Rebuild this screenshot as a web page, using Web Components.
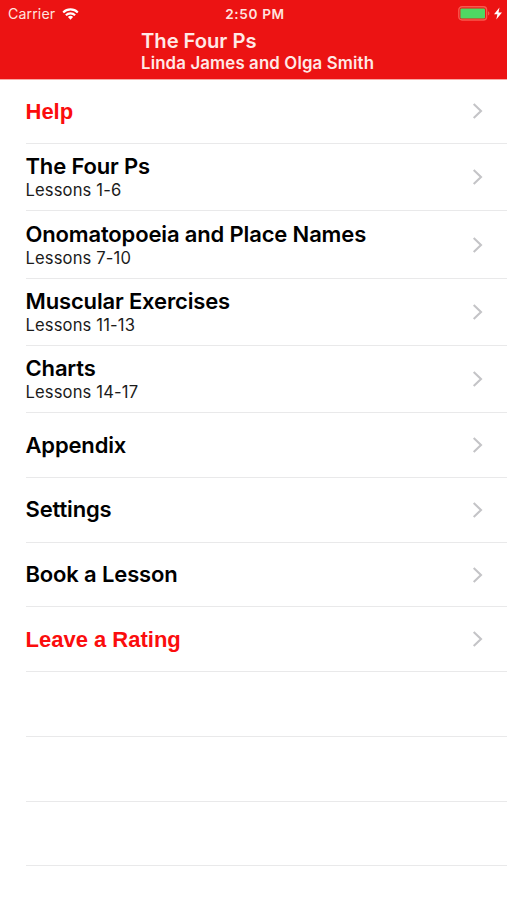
<!DOCTYPE html>
<html lang="en">
<head>
<meta charset="utf-8">
<title>The Four Ps</title>
<style>
html,body{margin:0;background:#fff}
body{width:507px;height:900px;overflow:hidden;font-family:Inter,"Liberation Sans",sans-serif;color:#000}
</style>
</head>
<body>
<app-screen></app-screen>
<script>
class StatusBar extends HTMLElement{
  constructor(){
    super();
    this.attachShadow({mode:'open'}).innerHTML=`
<style>
:host{display:grid;grid-template-columns:1fr auto 1fr;align-items:center;height:27px;color:#ffe3df;padding:0 5px 0 8px;box-sizing:border-box}
.l{display:flex;align-items:center;gap:7px;font-size:14.2px;letter-spacing:.1px}
.t{font-size:13.6px;font-weight:600;letter-spacing:.65px}
.r{display:flex;justify-content:flex-end;align-items:center;gap:4px}
svg{display:block}
</style>
<div class="l"><span>Carrier</span>
<svg width="17" height="12" viewBox="0 0 18 13" fill="none" stroke="#fff" stroke-width="2.3"><path d="M1.1 4.8a11.2 11.2 0 0 1 15.8 0"/><path d="M4 7.9a7.1 7.1 0 0 1 10 0"/><path d="M6.2 9.8a4 4 0 0 1 5.6 0L9 12.7z" fill="#fff" stroke="none"/></svg></div>
<div class="t">2:50 PM</div>
<div class="r">
<svg width="32" height="15" viewBox="0 0 32 15"><rect x=".8" y=".8" width="27.8" height="13.2" rx="3.2" fill="none" stroke="#f8594e" stroke-width="1.4"/><rect x="2.4" y="2.4" width="24.6" height="10" rx="1.2" fill="#4fd863"/><path d="M30 5.2q1.4.6 1.4 2.2T30 9.6z" fill="#f8594e"/></svg>
<svg width="8" height="13" viewBox="0 0 8 13"><path d="M5.5.5 0 7.3h3.4L2.3 12.4 8 5.6H4.5z" fill="#fff"/></svg>
</div>`;
  }
}
customElements.define('status-bar',StatusBar);

class NavBar extends HTMLElement{
  constructor(){
    super();
    this.attachShadow({mode:'open'}).innerHTML=`
<style>
:host{display:block;height:52px;padding-left:141px;box-sizing:border-box;color:#ffe9e6;white-space:nowrap}
.h{font-size:20.2px;line-height:26px;font-weight:600;letter-spacing:-.03px;padding-top:1px}
.s{font-size:16.8px;line-height:19px;font-weight:600;letter-spacing:.15px}
</style>
<div class="h"><slot></slot></div><div class="s"><slot name="subtitle"></slot></div>`;
  }
}
customElements.define('nav-bar',NavBar);

class ListRow extends HTMLElement{
  constructor(){
    super();
    this.attachShadow({mode:'open'}).innerHTML=`
<style>
:host{display:flex;align-items:center;box-sizing:border-box;height:64.7px;margin-left:25.5px;padding-right:24px;border-bottom:1px solid #e9e9ea;white-space:nowrap}
:host([double]){height:67.3px}
.x{flex:1}
.t{font-size:22px;line-height:27px;font-weight:600;letter-spacing:-.15px}
.s{display:none;font-size:16.6px;line-height:21px;margin-top:1px;color:#1c1c1c;letter-spacing:.13px}
:host([double]) .t{line-height:26px}
:host([double]) .s{display:block}
:host([accent]) .t{color:#fb0d0d;font-family:"Liberation Sans",sans-serif;font-weight:700;letter-spacing:0}
:host([empty]) svg{display:none}
svg{display:block}
</style>
<div class="x"><div class="t"><slot></slot></div><div class="s"><slot name="detail"></slot></div></div>
<svg width="11" height="16" viewBox="0 0 11 16" fill="none" stroke="#c4c4c7" stroke-width="2.1"><path d="M1.7 1 9 8l-7.3 7"/></svg>`;
  }
}
customElements.define('list-row',ListRow);

class AppScreen extends HTMLElement{
  constructor(){
    super();
    this.attachShadow({mode:'open'}).innerHTML=`
<style>
:host{display:block;height:900px;background:#fff}
header{background:#ec1313;border-bottom:1px solid #f8a9a4;box-sizing:border-box;height:79.5px}
</style>
<header><status-bar></status-bar><nav-bar>The Four Ps<span slot="subtitle">Linda James and Olga Smith</span></nav-bar></header>
<main>
<list-row accent>Help</list-row>
<list-row double>The Four Ps<span slot="detail">Lessons 1-6</span></list-row>
<list-row double>Onomatopoeia and Place Names<span slot="detail">Lessons 7-10</span></list-row>
<list-row double>Muscular Exercises<span slot="detail">Lessons 11-13</span></list-row>
<list-row double>Charts<span slot="detail">Lessons 14-17</span></list-row>
<list-row>Appendix</list-row>
<list-row>Settings</list-row>
<list-row>Book a Lesson</list-row>
<list-row accent>Leave a Rating</list-row>
<list-row empty></list-row>
<list-row empty></list-row>
<list-row empty></list-row>
</main>`;
  }
}
customElements.define('app-screen',AppScreen);
</script>
</body>
</html>
